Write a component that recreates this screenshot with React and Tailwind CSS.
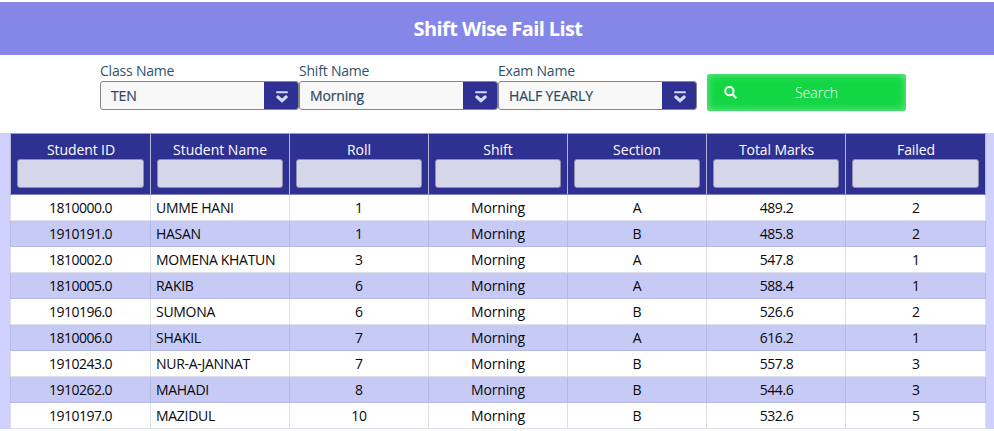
import React from 'react';

const columns = ['Student ID', 'Student Name', 'Roll', 'Shift', 'Section', 'Total Marks', 'Failed'];

const rows = [
  ['1810000.0', 'UMME HANI', '1', 'Morning', 'A', '489.2', '2'],
  ['1910191.0', 'HASAN', '1', 'Morning', 'B', '485.8', '2'],
  ['1810002.0', 'MOMENA KHATUN', '3', 'Morning', 'A', '547.8', '1'],
  ['1810005.0', 'RAKIB', '6', 'Morning', 'A', '588.4', '1'],
  ['1910196.0', 'SUMONA', '6', 'Morning', 'B', '526.6', '2'],
  ['1810006.0', 'SHAKIL', '7', 'Morning', 'A', '616.2', '1'],
  ['1910243.0', 'NUR-A-JANNAT', '7', 'Morning', 'B', '557.8', '3'],
  ['1910262.0', 'MAHADI', '8', 'Morning', 'B', '544.6', '3'],
  ['1910197.0', 'MAZIDUL', '10', 'Morning', 'B', '532.6', '5'],
];

const grid = 'grid grid-cols-[140px_139px_139px_139px_139px_139px_141px]';

const cellStyles = [
  'text-center tracking-[-0.5px]',
  'pl-[5px] tracking-[-0.3px]',
  'text-center tracking-[-0.15px]',
  'text-center tracking-[-0.15px]',
  'text-center tracking-[-0.15px]',
  'pl-px text-center tracking-[-0.4px]',
  'pl-px text-center tracking-[-0.15px]',
];

const headStyles = ['pl-px tracking-[-0.1px]', '', '', '', '', 'pl-px tracking-[-0.1px]', 'pl-px tracking-[-0.1px]'];

function Select({ label, value }) {
  return (
    <div className="w-[199px]">
      <div className="h-5 text-sm leading-5 tracking-[-0.2px] text-[#2f5268]">{label}</div>
      <div className="flex h-[29px] overflow-hidden rounded-[3px] border border-[#85858f] bg-[#f8f8f9]">
        <div className="flex-1 pl-[10px] text-sm leading-[28px] tracking-[-0.15px] text-[#2b4a63] [-webkit-text-stroke:0.2px_#2b4a63]">{value}</div>
        <div className="flex w-[34px] items-center justify-center bg-[#2e3092]">
          <svg className="mt-0.5 ml-0.5 h-[12px] w-[12px]" viewBox="0 0 12 12" fill="none" stroke="#d3daf8" strokeLinecap="round">
            <path d="M1 1.3h10" strokeWidth="1.9" />
            <path d="M1.9 6L6 9.6L10.1 6" strokeWidth="3.2" />
          </svg>
        </div>
      </div>
    </div>
  );
}

export default function App() {
  return (
    <div className="h-[431px] w-[994px] overflow-hidden bg-white pt-0.5 font-['Open_Sans','Noto_Sans',sans-serif]">
      <header className="flex h-[53px] items-center justify-center bg-[#8587e8]">
        <h1 className="pl-0.5 text-xl font-bold tracking-[-0.6px] text-white">Shift Wise Fail List</h1>
      </header>

      <div className="flex h-[78px] pt-1.5 pl-[100px]">
        <Select label="Class Name" value="TEN" />
        <Select label="Shift Name" value="Morning" />
        <Select label="Exam Name" value="HALF YEARLY" />
        <button className="mt-[13px] ml-2.5 flex h-[37px] w-[199px] items-center rounded-[3px] bg-[#13d645] text-sm font-light text-white shadow-[inset_0_0_8px_#7bea95]">
          <svg className="ml-[17px] h-[13px] w-[13px]" viewBox="0 0 13 13" fill="none" stroke="#ffffff">
            <circle cx="5.4" cy="5.1" r="4.2" strokeWidth="2" />
            <path d="M8.5 8.3l3.8 3.8" strokeWidth="2.3" />
          </svg>
          <span className="flex-1 pr-[10px] text-center">Search</span>
        </button>
      </div>

      <div className="h-[296px] bg-[#cfd0fd] pl-2.5">
        <div className="w-[976px] text-sm">
          <div className={`${grid} h-[62px] border-t border-b border-t-[#9a9bd0] border-b-[#8183ba] bg-[#2e3092]`}>
            {columns.map((name, i) => (
              <label
                key={name}
                className="flex flex-col border-l border-[#b2b4dc] pt-1.5 pr-1.5 pl-1.5 text-center leading-[19px] text-white last:border-r"
              >
                <span className={headStyles[i]}>{name}</span>
                <input className="h-[29px] w-full rounded-[3px] border border-[#8f90ae] bg-[#d5d6e9]" />
              </label>
            ))}
          </div>
          {rows.map((row, r) => (
            <div key={row[0]} className={`${grid} h-[26px] border-b ${r % 2 ? 'border-[#b4b8e4] bg-[#c6caf5]' : 'border-[#dddfe9] bg-white'}`}>
              {row.map((cell, i) => (
                <div
                  key={columns[i]}
                  className={`border-l leading-[26px] text-[#08080c] last:border-r ${r % 2 ? 'border-[#b4b8e4]' : 'border-[#dddfe9]'} ${cellStyles[i]}`}
                >
                  {cell}
                </div>
              ))}
            </div>
          ))}
        </div>
      </div>
    </div>
  );
}
